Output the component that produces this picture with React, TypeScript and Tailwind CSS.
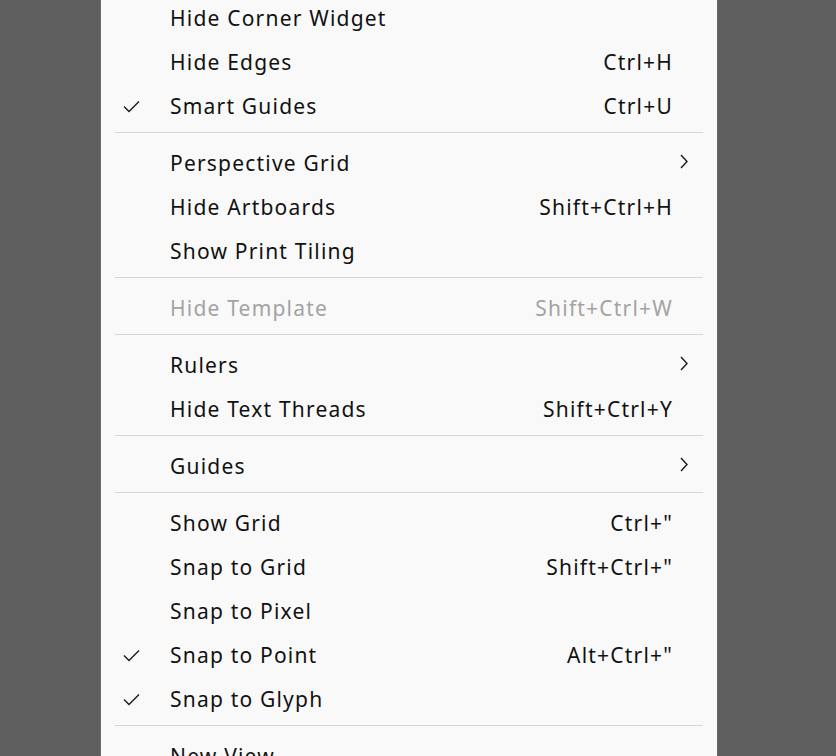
import React from "react";

type Item =
  | { type: "sep" }
  | { type: "item"; label: string; shortcut?: string; checked?: boolean; sub?: boolean; disabled?: boolean };

const items: Item[] = [
  { type: "item", label: "Hide Corner Widget" },
  { type: "item", label: "Hide Edges", shortcut: "Ctrl+H" },
  { type: "item", label: "Smart Guides", shortcut: "Ctrl+U", checked: true },
  { type: "sep" },
  { type: "item", label: "Perspective Grid", sub: true },
  { type: "item", label: "Hide Artboards", shortcut: "Shift+Ctrl+H" },
  { type: "item", label: "Show Print Tiling" },
  { type: "sep" },
  { type: "item", label: "Hide Template", shortcut: "Shift+Ctrl+W", disabled: true },
  { type: "sep" },
  { type: "item", label: "Rulers", sub: true },
  { type: "item", label: "Hide Text Threads", shortcut: "Shift+Ctrl+Y" },
  { type: "sep" },
  { type: "item", label: "Guides", sub: true },
  { type: "sep" },
  { type: "item", label: "Show Grid", shortcut: 'Ctrl+"' },
  { type: "item", label: "Snap to Grid", shortcut: 'Shift+Ctrl+"' },
  { type: "item", label: "Snap to Pixel" },
  { type: "item", label: "Snap to Point", shortcut: 'Alt+Ctrl+"', checked: true },
  { type: "item", label: "Snap to Glyph", checked: true },
  { type: "sep" },
  { type: "item", label: "New View" },
];

function Check() {
  return (
    <svg width="17" height="13" viewBox="0 0 17 13" fill="none">
      <path d="M1 6.5 L6 11.5 L16 1.5" stroke="#1a1a1a" strokeWidth="1.4" />
    </svg>
  );
}

function Chevron() {
  return (
    <svg width="10" height="15" viewBox="0 0 10 15" fill="none">
      <path d="M2 1 L8 7.5 L2 14" stroke="#1a1a1a" strokeWidth="1.4" />
    </svg>
  );
}

export default function App() {
  return (
    <div
      className="w-[836px] h-[756px] bg-[#5f5f5f] overflow-hidden"
      style={{ fontFamily: '"Noto Sans", "Open Sans", sans-serif' }}
    >
      <div className="ml-[100px] w-[618px] -mt-[4px] bg-[#f9f9f9] border-l border-r border-[#6a6a6a]">
        {items.map((it, i) =>
          it.type === "sep" ? (
            <div key={i} className="pt-[4px] pb-[8px] pl-[14px] pr-[14px]">
              <div className="h-px bg-[#d6d6d6]" />
            </div>
          ) : (
            <div
              key={i}
              className={`h-[44px] flex items-center text-[21px] leading-none tracking-[1.2px] ${
                it.disabled ? "text-[#a3a3a3]" : "text-[#111111]"
              }`}
            >
              <div className="w-[69px] shrink-0 pl-[22px] flex items-center">
                {it.checked ? <Check /> : null}
              </div>
              <div className="flex-1 whitespace-nowrap">{it.label}</div>
              {it.shortcut ? (
                <div className="pr-[44px] whitespace-nowrap">{it.shortcut}</div>
              ) : null}
              {it.sub ? (
                <div className="pr-[28px] pb-[3px] flex items-center">
                  <Chevron />
                </div>
              ) : null}
            </div>
          )
        )}
      </div>
    </div>
  );
}
